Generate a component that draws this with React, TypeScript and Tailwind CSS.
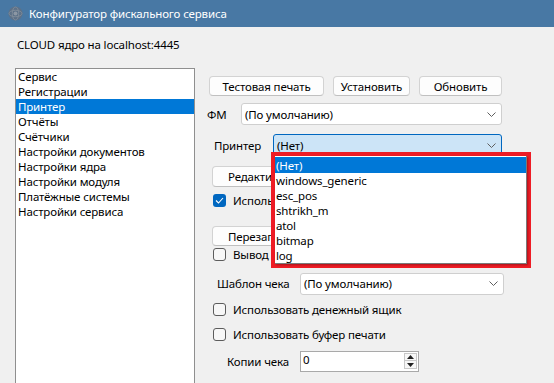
import React from "react";

function Chevron() {
  return (
    <svg width="9" height="5" viewBox="0 0 9 5" className="shrink-0">
      <polyline points="0.5,0.5 4.5,4.5 8.5,0.5" fill="none" stroke="#5f5f5f" strokeWidth="1" />
    </svg>
  );
}

function Combo({ text, w, active }: { text: string; w: string; active?: boolean }) {
  return (
    <div
      className={
        "flex items-center justify-between h-[22px] pl-[3px] pr-[5px] rounded-[3px] border " +
        (active ? "bg-[#cce4f7] border-[#0067c0] " : "bg-white border-[#cfcfcf] ") +
        w
      }
    >
      <span className="whitespace-nowrap">{text}</span>
      <Chevron />
    </div>
  );
}

function Btn({ children, w }: { children: React.ReactNode; w: string }) {
  return (
    <div
      className={
        "h-[20px] flex items-center justify-center bg-[#fdfdfd] border border-[#d3d3d3] border-b-[#c0c0c0] rounded-[4px] whitespace-nowrap shrink-0 " +
        w
      }
    >
      {children}
    </div>
  );
}

function Check({ checked, label }: { checked?: boolean; label: string }) {
  return (
    <div className="flex items-center h-[15px] ml-[6px]">
      {checked ? (
        <div className="w-[13px] h-[13px] shrink-0 rounded-[3px] bg-[#0067c0] flex items-center justify-center">
          <svg width="9" height="7" viewBox="0 0 9 7">
            <polyline points="1,3.5 3.5,6 8,1" fill="none" stroke="white" strokeWidth="1.1" />
          </svg>
        </div>
      ) : (
        <div className="w-[13px] h-[13px] shrink-0 rounded-[3px] border border-[#5c5c5c] bg-[#f7f7f7]" />
      )}
      <span className="ml-[7px] whitespace-nowrap">{label}</span>
    </div>
  );
}

export default function App() {
  const nav = [
    "Сервис",
    "Регистрации",
    "Принтер",
    "Отчёты",
    "Счётчики",
    "Настройки документов",
    "Настройки ядра",
    "Настройки модуля",
    "Платёжные системы",
    "Настройки сервиса",
  ];
  const printers = ["(Нет)", "windows_generic", "esc_pos", "shtrikh_m", "atol", "bitmap", "log"];

  return (
    <div className="relative w-[554px] h-[383px] overflow-hidden bg-[#f0f0f0] text-[11.5px] tracking-[-0.15px] leading-[15px] text-black font-['Noto_Sans',sans-serif]">
      {/* title bar */}
      <div className="h-[27px] bg-[#4878a4] flex items-center pl-[8px]">
        <svg width="15" height="15" viewBox="0 0 15 15" className="shrink-0">
          <circle cx="7.5" cy="7.5" r="7" fill="#5d7188" />
          <ellipse cx="7.5" cy="7.5" rx="6.5" ry="3.2" fill="none" stroke="#7d8a98" strokeWidth="1" />
          <ellipse cx="7.5" cy="7.5" rx="3.2" ry="6.5" fill="none" stroke="#7d8a98" strokeWidth="1" />
          <circle cx="7.5" cy="7.5" r="2" fill="#8c97a4" />
        </svg>
        <span className="ml-[6px] text-white">Конфигуратор фискального сервиса</span>
      </div>

      {/* header */}
      <div className="pl-[17px] pt-[10px] h-[41px]">CLOUD ядро на localhost:4445</div>

      {/* content */}
      <div className="flex pl-[15px]">
        <div className="w-[180px] h-[340px] bg-white border border-[#8f8f8f] shrink-0">
          {nav.map((n, i) => (
            <div
              key={n}
              className={
                "h-[15px] pl-[2px] whitespace-nowrap flex items-center " +
                (i === 2 ? "bg-[#0078d7] text-white" : "")
              }
            >
              {n}
            </div>
          ))}
        </div>

        <div className="flex flex-col ml-[12px]">
          <div className="flex mt-[8px] ml-[2px] gap-[9px]">
            <Btn w="w-[115px]">Тестовая печать</Btn>
            <Btn w="w-[77px]">Установить</Btn>
            <Btn w="w-[83px]">Обновить</Btn>
          </div>

          <div className="flex items-center mt-[7px] h-[22px]">
            <span className="w-[34px]">ФМ</span>
            <Combo text="(По умолчанию)" w="w-[261px]" />
          </div>

          <div className="flex items-center mt-[9px] h-[22px] ml-[7px]">
            <span className="w-[59px]">Принтер</span>
            <Combo text="(Нет)" w="w-[229px]" active />
          </div>

          {/* controls partly hidden by the open dropdown */}
          <div className="mt-[10px] ml-[5px] w-[66px] overflow-hidden">
            <Btn w="w-[180px] h-[21px] justify-start pl-[15px]">Редакти</Btn>
          </div>

          <div className="mt-[6px] w-[72px] overflow-hidden">
            <Check checked label="Исполь" />
          </div>

          <div className="mt-[18px] ml-[5px] w-[66px] overflow-hidden">
            <Btn w="w-[180px] justify-start pl-[15px]">Перезап</Btn>
          </div>

          <div className="mt-[1px] w-[72px] overflow-hidden">
            <Check label="Вывод" />
          </div>

          <div className="flex items-center mt-[11px] h-[21px] ml-[10px]">
            <span className="w-[83px]">Шаблон чека</span>
            <Combo text="(По умолчанию)" w="w-[204px] h-[21px]" />
          </div>

          <div className="mt-[8px]">
            <Check label="Использовать денежный ящик" />
          </div>

          <div className="mt-[10px]">
            <Check label="Использовать буфер печати" />
          </div>

          <div className="flex items-center mt-[9px] h-[21px] ml-[20px]">
            <span className="w-[73px]">Копии чека</span>
            <div className="w-[119px] h-[21px] bg-white border border-[#a9a9a9] flex justify-between">
              <span className="pl-[2px] leading-[15px]">0</span>
              <div className="flex flex-col mr-[1px] mt-[1px]">
                <div className="w-[13px] h-[8px] border border-[#c8c8c8] bg-[#f7f7f7] flex items-center justify-center">
                  <svg width="7" height="4" viewBox="0 0 7 4"><polygon points="0,4 3.5,0 7,4" fill="#202020" /></svg>
                </div>
                <div className="w-[13px] h-[8px] border border-[#c8c8c8] border-t-0 bg-[#f7f7f7] flex items-center justify-center">
                  <svg width="7" height="4" viewBox="0 0 7 4"><polygon points="0,0 3.5,4 7,0" fill="#202020" /></svg>
                </div>
              </div>
            </div>
          </div>
        </div>
      </div>

      {/* dropdown popup with red highlight */}
      <div className="absolute left-[271px] top-[152px] w-[260px] h-[116px] border-[4px] border-[#ee1c25]">
        <div className="w-full h-full bg-white border border-[#7a7a7a] border-t-0 border-l-0 shadow-[1px_1px_2px_rgba(0,0,0,0.3)] pt-[1px]">
          {printers.map((p, i) => (
            <div
              key={p}
              className={
                "pl-[1px] whitespace-nowrap flex items-center " +
                (i === 0 ? "h-[16px] bg-[#0078d7] text-white" : "h-[15px]")
              }
            >
              {p}
            </div>
          ))}
        </div>
      </div>
    </div>
  );
}
